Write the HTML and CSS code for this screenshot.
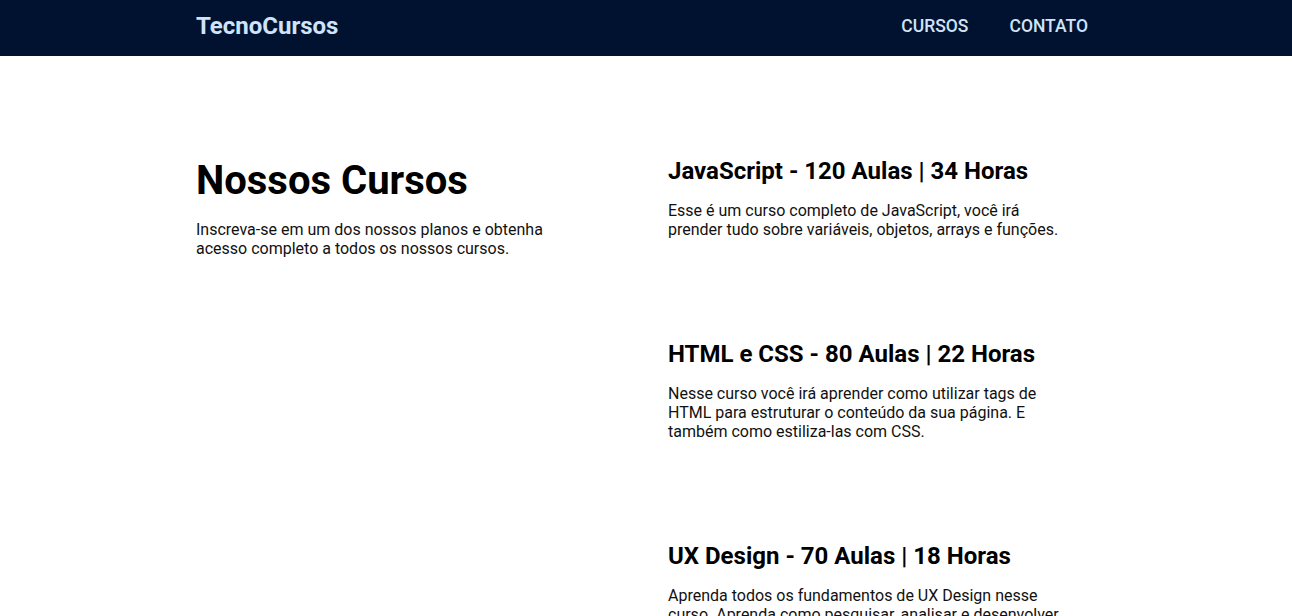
FILE: index.html
```html
<!DOCTYPE html>
<html lang="pt-BR">
<head>
<meta charset="utf-8">
<title>TecnoCursos</title>
<link rel="stylesheet" href="styles.css">
</head>
<body>
<header class="topbar">
  <div class="container topbar-inner">
    <a class="logo" href="#">TecnoCursos</a>
    <nav class="menu">
      <a href="#">CURSOS</a>
      <a href="#">CONTATO</a>
    </nav>
  </div>
</header>
<main class="container content">
  <section class="intro">
    <h1>Nossos Cursos</h1>
    <p>Inscreva-se em um dos nossos planos e obtenha acesso completo a todos os nossos cursos.</p>
  </section>
  <section class="courses">
    <article class="course">
      <h2>JavaScript - 120 Aulas | 34 Horas</h2>
      <p>Esse é um curso completo de JavaScript, você irá prender tudo sobre variáveis, objetos, arrays e funções.</p>
    </article>
    <article class="course">
      <h2>HTML e CSS - 80 Aulas | 22 Horas</h2>
      <p>Nesse curso você irá aprender como utilizar tags de HTML para estruturar o conteúdo da sua página. E também como estiliza-las com CSS.</p>
    </article>
    <article class="course">
      <h2>UX Design - 70 Aulas | 18 Horas</h2>
      <p>Aprenda todos os fundamentos de UX Design nesse curso. Aprenda como pesquisar, analisar e desenvolver interfaces para seus usuários.</p>
    </article>
  </section>
</main>
</body>
</html>
```

FILE: styles.css
```css
* { box-sizing: border-box; }
body {
  margin: 0;
  font-family: Roboto, "Liberation Sans", Arial, sans-serif;
  color: #111;
  background: #fff;
}
.container {
  width: 900px;
  margin: 0 auto;
}
.topbar {
  background: #001230;
}
.topbar-inner {
  height: 56px;
  padding-bottom: 4px;
  display: flex;
  align-items: center;
  justify-content: space-between;
}
.logo {
  color: #cfe3fb;
  font-size: 24px;
  font-weight: 700;
  text-decoration: none;
}
.menu {
  display: flex;
  gap: 41px;
  padding-right: 8px;
}
.menu a {
  color: #cfe3fb;
  font-size: 17.5px;
  font-weight: 500;
  text-decoration: none;
}
.content {
  display: grid;
  grid-template-columns: 472px 400px;
  padding-top: 101px;
}
.intro h1 {
  margin: 0 0 16px;
  font-size: 40px;
  font-weight: 700;
  color: #000;
}
.intro p {
  margin: 0;
  max-width: 360px;
  font-size: 16px;
}
.course {
  margin-bottom: 101px;
}
.course h2 {
  margin: 0 0 16px;
  font-size: 24px;
  font-weight: 700;
  color: #000;
}
.course p {
  margin: 0;
  font-size: 16px;
}
```
